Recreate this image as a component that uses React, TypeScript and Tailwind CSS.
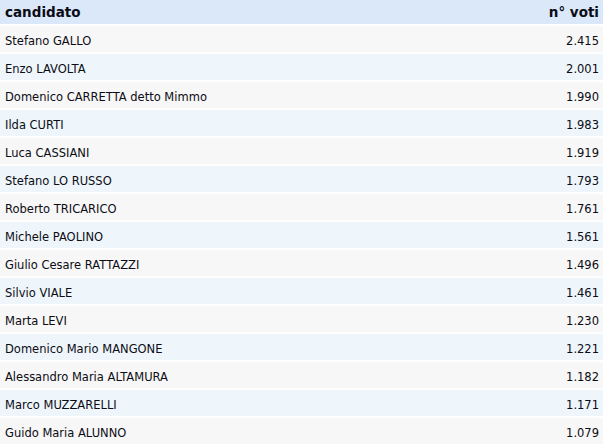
const rows: [string, string][] = [
  ['Stefano GALLO', '2.415'],
  ['Enzo LAVOLTA', '2.001'],
  ['Domenico CARRETTA detto Mimmo', '1.990'],
  ['Ilda CURTI', '1.983'],
  ['Luca CASSIANI', '1.919'],
  ['Stefano LO RUSSO', '1.793'],
  ['Roberto TRICARICO', '1.761'],
  ['Michele PAOLINO', '1.561'],
  ['Giulio Cesare RATTAZZI', '1.496'],
  ['Silvio VIALE', '1.461'],
  ['Marta LEVI', '1.230'],
  ['Domenico Mario MANGONE', '1.221'],
  ['Alessandro Maria ALTAMURA', '1.182'],
  ['Marco MUZZARELLI', '1.171'],
  ['Guido Maria ALUNNO', '1.079'],
];

export default function App() {
  return (
    <div className="w-[607px] h-[444px] overflow-hidden bg-white font-['DejaVu_Sans',sans-serif] text-[#0c0c14]">
      <div className="w-[603px] flex flex-col gap-[2px]">
        {/* header */}
        <div className="h-[24px] bg-[#dae8fa] flex items-center justify-between pl-[5px] pr-[4px] pt-[1px] text-[13.5px] font-bold">
          <span>candidato</span>
          <span>n° voti</span>
        </div>
        {rows.map(([name, votes], i) => (
          <div
            key={name}
            className={`h-[26px] flex items-center justify-between pl-[5px] pr-[4px] pt-[5px] text-[11.5px] ${i % 2 === 0 ? 'bg-[#f7f7f7]' : 'bg-[#eef6fb]'}`}
          >
            <span>{name}</span>
            <span>{votes}</span>
          </div>
        ))}
      </div>
    </div>
  );
}
